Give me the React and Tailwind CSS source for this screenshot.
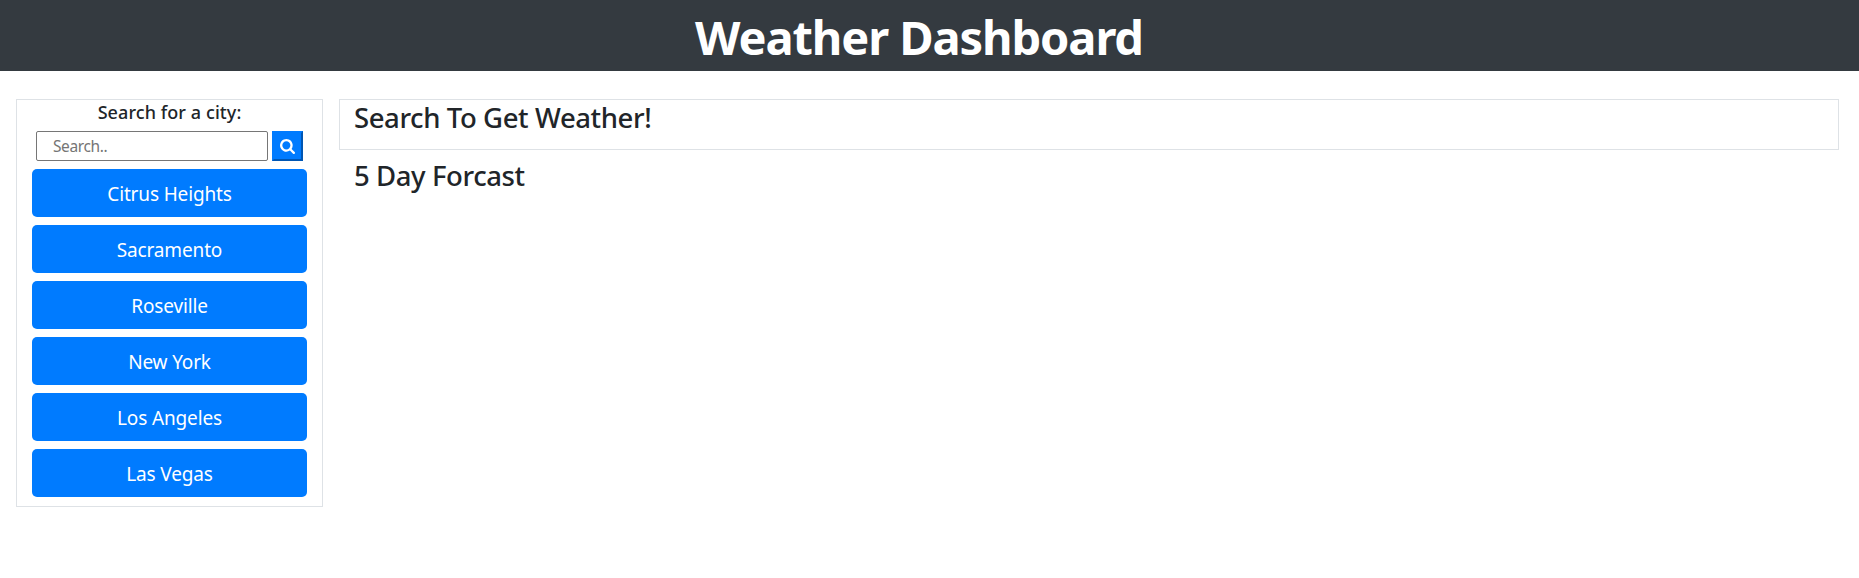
const cities = ["Citrus Heights", "Sacramento", "Roseville", "New York", "Los Angeles", "Las Vegas"];

function SearchIcon() {
  return (
    <svg viewBox="0 0 1664 1664" className="h-[15px] w-[15px] fill-white">
      <path d="M1152 704q0-185-131.500-316.500T704 256 387.500 387.500 256 704t131.500 316.500T704 1152t316.500-131.500T1152 704zm512 832q0 52-38 90t-90 38q-54 0-90-38l-343-342q-179 124-399 124-143 0-273.500-55.500t-225-150-150-225T0 704t55.500-273.500 150-225 225-150T704 0t273.500 55.500 225 150 150 225T1408 704q0 220-124 399l343 343q37 37 37 90z" />
    </svg>
  );
}

export default function App() {
  return (
    <div className="min-h-[578px] bg-white font-['Noto_Sans',sans-serif] text-[#212529]">
      <header className="flex h-[71px] justify-center bg-[#343a40] pt-2 pr-[21px]">
        <h1 className="text-[47px] leading-[58px] font-bold tracking-[-1.1px] whitespace-nowrap text-white">Weather Dashboard</h1>
      </header>
      <main className="flex items-start gap-4 pt-7 pr-5 pl-4">
        <aside className="flex h-[408px] w-[307px] shrink-0 flex-col border border-[#dee2e6] px-[15px]">
          <h2 className="h-[31px] text-center text-[18px] leading-6 font-medium tracking-[0.08px]">Search for a city:</h2>
          <div className="flex h-[30px] justify-center gap-1">
            <input
              type="text"
              placeholder="Search.."
              className="h-[30px] w-[232px] rounded-[2px] border border-[#767676] bg-white px-4 text-[15.5px] tracking-[-0.4px] placeholder:text-[#757575]"
            />
            <button
              aria-label="Search"
              className="flex h-[30px] w-[31px] items-center justify-center border-2 border-t-[#007bff] border-r-[#0056b3] border-b-[#0056b3] border-l-[#007bff] bg-[#007bff]"
            >
              <SearchIcon />
            </button>
          </div>
          <div className="mt-2 flex flex-col gap-2">
            {cities.map((city) => (
              <button key={city} className="h-12 rounded-[5px] bg-[#007bff] pt-0.5 text-[19px] leading-[30px] tracking-[-0.15px] text-white">
                {city}
              </button>
            ))}
          </div>
        </aside>
        <div className="min-w-0 flex-1">
          <section className="h-[51px] border border-[#dee2e6] pl-[14px]">
            <h2 className="text-[27.5px] leading-9 font-medium tracking-[-0.4px]">Search To Get Weather!</h2>
          </section>
          <h2 className="mt-2 pl-[15px] text-[27.5px] leading-9 font-medium tracking-[-0.4px]">5 Day Forcast</h2>
        </div>
      </main>
    </div>
  );
}
